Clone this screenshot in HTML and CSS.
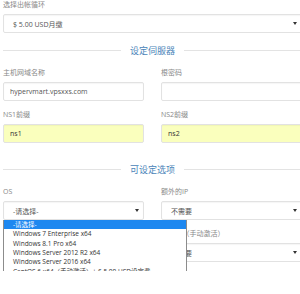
FILE: index.html
```html
<!DOCTYPE html>
<html lang="zh-Hans">
<head>
  <meta charset="UTF-8" />
  <meta name="viewport" content="width=device-width, initial-scale=1.0" />
  <title>设定伺服器</title>
  <link rel="stylesheet" href="styles.css">
</head>
<body>
<div class="page">

  <div class="field top">
    <label>选择出帐循环</label>
    <div class="select"><span>$ 5.00 USD月缴</span><i class="caret"></i></div>
  </div>

  <div class="divider"><span>设定伺服器</span></div>

  <div class="row">
    <div class="field">
      <label>主机网域名称</label>
      <input class="input" type="text" value="hypervmart.vpsxxs.com" />
    </div>
    <div class="field">
      <label>根密码</label>
      <input class="input" type="password" value="" />
    </div>
    <div class="field">
      <label>NS1前缀</label>
      <input class="input filled" type="text" value="ns1" />
    </div>
    <div class="field">
      <label>NS2前缀</label>
      <input class="input filled" type="text" value="ns2" />
    </div>
  </div>

  <div class="divider"><span>可设定选项</span></div>

  <div class="row">
    <div class="field open">
      <label>OS</label>
      <div class="select"><span>-请选择-</span><i class="caret"></i></div>
      <ul class="dropdown">
        <li class="active">-请选择-</li>
        <li>Windows 7 Enterprise x64</li>
        <li>Windows 8.1 Pro x64</li>
        <li>Windows Server 2012 R2 x64</li>
        <li>Windows Server 2016 x64</li>
        <li>CentOS 6 x64（手动激活）+ $ 5.00 USD设定费</li>
        <li>CentOS 7 x64（手动激活）+ $ 5.00 USD设定费</li>
        <li>Ubuntu 16.04 LTS x64（手动激活）+ $ 5.00 USD设定费</li>
      </ul>
    </div>
    <div class="field">
      <label>额外的IP</label>
      <div class="select"><span>不需要</span><i class="caret"></i></div>
    </div>
    <div class="field right">
      <label>cPanel（手动激活）</label>
      <div class="select"><span>不需要</span><i class="caret"></i></div>
    </div>
  </div>

</div>
</body>
</html>
```

FILE: styles.css
```css
body {
  margin: 0;
  background: #fff;
  font-family: "Open Sans", "Noto Sans CJK SC", sans-serif;
  font-size: 7px;
  color: #555;
  overflow: hidden;
}
.page {
  width: 299px;
  padding-left: 3px;
}
.field {
  margin-bottom: 9px;
}
.field.top {
  margin-bottom: 0;
}
.field.right {
  grid-column: 2;
}
.field label {
  display: block;
  line-height: 10px;
  margin-bottom: 4px;
  color: #888;
}
.input, .select {
  box-sizing: border-box;
  width: 100%;
  height: 19px;
  margin: 0;
  border: 1px solid #e2e2e2;
  border-radius: 2px;
  box-shadow: inset 0 1px 1px rgba(0,0,0,0.04);
  background: #fff;
  color: #555;
  font: inherit;
}
.input {
  display: block;
  padding: 0 6px;
  outline: none;
}
.input.filled {
  background: #faffbd;
  color: #333;
}
.select {
  display: flex;
  align-items: center;
  justify-content: space-between;
  padding: 0 4px 0 9px;
}
.caret {
  width: 0;
  height: 0;
  border-left: 2px solid transparent;
  border-right: 2px solid transparent;
  border-top: 3px solid #333;
}
.row {
  display: grid;
  grid-template-columns: 141px 141px;
  column-gap: 17px;
}
.divider {
  display: flex;
  align-items: center;
  gap: 9px;
  margin: 12px 0;
  font-size: 9px;
  line-height: 11px;
  color: #4a84b8;
}
.divider::before, .divider::after {
  content: "";
  flex: 1;
  height: 1px;
  background: #e3e3e3;
}
.open {
  position: relative;
}
.dropdown {
  position: absolute;
  top: 100%;
  left: 0;
  z-index: 2;
  box-sizing: border-box;
  width: 184px;
  margin: 0;
  padding: 0;
  list-style: none;
  background: #fff;
  border: 1px solid #8c8c8c;
  border-top: 0;
  font-size: 6.5px;
  color: #333;
  white-space: nowrap;
  overflow: hidden;
}
.dropdown li {
  height: 9.35px;
  line-height: 9.35px;
  padding-left: 9px;
}
.dropdown li.active {
  background: #1e88f0;
  color: #fff;
}
```
